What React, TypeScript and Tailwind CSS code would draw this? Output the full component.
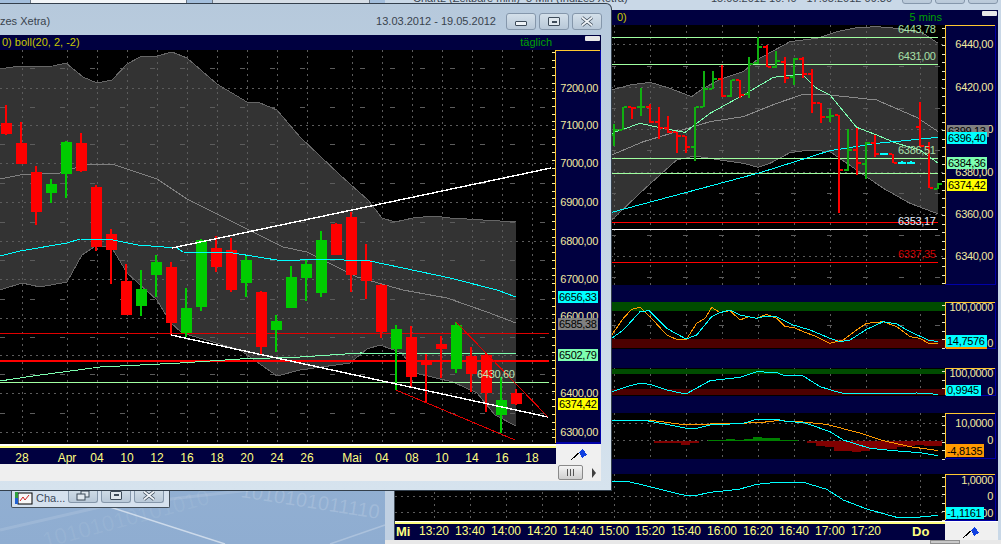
import type { ReactNode } from 'react'

type P = [number, number]
type Candle = [number, number, number, number, number, 'r' | 'g']
type Bar = [number, number, number, number, number, 'r' | 'g' | 'c']

const RED = '#ff0000'
const GREEN = '#00cc00'
const MINT = '#7dffb0'
const CYAN = '#00ffff'
const ORANGE = '#ff9900'
const LIME = '#a0ffa0'

// helpers
const toPts = (list: P[]) => list.map((p) => p.join(',')).join(' ')
// the small chart was measured at 3x, so convert back to page coords
const rx = (d: number) => 610 + d / 3
const low = (list: P[]): P[] => list.map(([x, y]) => [rx(x), 290 + y / 3])
const top = (list: P[]): P[] => list.map(([x, y]) => [rx(x), y / 3])

/* ---------- daily chart data ---------- */
const candles: Candle[] = [
  [6, 105, 135, 123, 134, 'r'], [21, 122, 164, 143, 164, 'r'], [36, 166, 225, 172, 212, 'r'],
  [51, 179, 203, 184, 193, 'g'], [66, 141, 198, 142, 174, 'g'], [81, 133, 172, 143, 171, 'r'],
  [96, 185, 251, 187, 247, 'r'], [111, 229, 284, 234, 250, 'r'], [126, 264, 315, 281, 315, 'r'],
  [141, 270, 316, 289, 306, 'g'], [156, 255, 297, 262, 275, 'g'], [171, 262, 335, 267, 323, 'r'],
  [186, 288, 337, 308, 333, 'g'], [201, 239, 311, 240, 307, 'g'], [216, 236, 272, 248, 267, 'r'],
  [231, 238, 292, 250, 290, 'r'], [246, 256, 297, 260, 283, 'g'], [261, 291, 355, 292, 347, 'r'],
  [276, 315, 352, 321, 330, 'g'], [291, 266, 308, 277, 308, 'g'], [306, 259, 301, 264, 278, 'g'],
  [321, 231, 297, 240, 293, 'g'], [336, 223, 255, 224, 255, 'r'], [351, 212, 292, 217, 275, 'r'],
  [366, 244, 299, 260, 281, 'r'], [381, 284, 338, 285, 332, 'r'], [396, 325, 390, 329, 349, 'g'],
  [411, 326, 387, 337, 377, 'r'], [426, 354, 402, 362, 365, 'r'], [441, 336, 378, 344, 349, 'r'],
  [456, 322, 373, 325, 369, 'g'], [471, 347, 392, 356, 374, 'r'], [486, 353, 412, 355, 393, 'r'],
  [501, 377, 433, 400, 415, 'g'], [516, 389, 405, 393, 404, 'r'],
]
const dayUpper: P[] = [[0, 69], [13, 67], [53, 66], [66, 63], [83, 77], [97, 83], [112, 80], [127, 64], [140, 57], [157, 56], [172, 52], [187, 58], [217, 84], [247, 102], [260, 103], [277, 110], [300, 137], [340, 175], [368, 200], [382, 218], [395, 222], [413, 218], [433, 216], [450, 218], [516, 222]]
const dayLower: P[] = [[0, 290], [22, 283], [40, 287], [67, 282], [82, 255], [97, 245], [112, 248], [127, 273], [157, 300], [170, 322], [182, 333], [213, 342], [240, 350], [257, 362], [277, 376], [300, 370], [350, 363], [367, 349], [380, 345], [402, 353], [415, 373], [453, 382], [477, 393], [495, 415], [516, 426]]
const dayMid: P[] = [[0, 179], [20, 175], [60, 173], [87, 164], [112, 164], [157, 179], [187, 199], [233, 222], [283, 247], [307, 252], [357, 277], [403, 290], [447, 298], [487, 312], [516, 323]]
const dayCyan: P[] = [[0, 256], [20, 251], [67, 243], [80, 239], [113, 240], [138, 245], [177, 248], [183, 252], [233, 253], [283, 261], [317, 259], [370, 261], [450, 278], [497, 290], [516, 297]]
const dayMint: P[] = [[0, 381], [33, 376], [100, 367], [180, 363], [240, 359], [300, 357], [360, 353], [516, 354]]
const dayDates: [number, string][] = [[22, '28'], [67, 'Apr'], [97, '04'], [127, '10'], [157, '12'], [187, '16'], [217, '18'], [247, '20'], [277, '24'], [307, '26'], [352, 'Mai'], [382, '04'], [412, '08'], [442, '10'], [472, '14'], [502, '16'], [532, '18']]
const dayPrices: [number, string][] = [[88, '7200,00'], [125, '7100,00'], [163, '7000,00'], [202, '6900,00'], [241, '6800,00'], [279, '6700,00'], [316, '6600,00'], [393, '6400,00'], [432, '6300,00']]

/* ---------- 5 min chart data (x, high, low, left tick, right tick), 3x values ---------- */
const bars: Bar[] = [
  [10, 372, 437, 405, 390, 'g'], [37, 322, 390, 390, 322, 'g'], [63, 322, 356, 322, 325, 'r'], [90, 264, 347, 322, 320, 'g'],
  [117, 313, 368, 320, 366, 'r'], [144, 322, 418, 366, 385, 'r'], [171, 349, 400, 385, 396, 'r'], [198, 396, 460, 396, 408, 'r'],
  [225, 408, 460, 408, 442, 'r'], [252, 322, 482, 442, 322, 'g'], [279, 212, 322, 322, 267, 'g'], [306, 212, 268, 267, 238, 'g'],
  [333, 195, 290, 238, 288, 'r'], [360, 240, 292, 288, 241, 'g'], [387, 240, 295, 241, 284, 'r'], [414, 172, 295, 283, 192, 'g'],
  [441, 112, 192, 190, 142, 'g'], [468, 135, 202, 142, 200, 'r'], [495, 153, 205, 200, 184, 'g'], [522, 170, 248, 186, 235, 'r'],
  [549, 175, 255, 230, 178, 'g'], [576, 170, 235, 178, 222, 'r'], [603, 207, 338, 222, 310, 'r'], [630, 310, 370, 310, 350, 'r'],
  [657, 328, 365, 350, 348, 'g'], [684, 345, 640, 346, 510, 'r'], [711, 388, 512, 510, 450, 'g'], [738, 384, 525, 450, 490, 'r'],
  [765, 425, 537, 492, 430, 'g'], [792, 405, 470, 430, 462, 'r'], [819, 458, 466, 462, 462, 'c'], [846, 462, 490, 462, 488, 'r'],
  [873, 484, 492, 488, 488, 'c'], [900, 484, 492, 488, 488, 'c'], [927, 305, 440, 380, 438, 'r'], [954, 425, 565, 440, 565, 'r'],
  [981, 550, 568, 566, 551, 'g'],
]
const minUpper: P[] = [[5, 270], [60, 255], [120, 247], [180, 265], [245, 290], [275, 268], [330, 238], [400, 215], [440, 180], [540, 125], [620, 115], [680, 95], [740, 83], [800, 80], [860, 85], [940, 100], [985, 130]]
const minLower: P[] = [[5, 660], [100, 570], [200, 480], [255, 468], [330, 480], [400, 490], [445, 502], [480, 490], [540, 458], [600, 450], [660, 455], [740, 510], [820, 565], [900, 610], [985, 642]]
const minMid: P[] = [[5, 465], [100, 425], [200, 395], [300, 365], [400, 350], [500, 310], [580, 283], [660, 285], [800, 300], [920, 352], [985, 395]]
const minMint: P[] = [[5, 400], [90, 370], [160, 385], [225, 397], [300, 340], [400, 285], [490, 232], [575, 222], [620, 265], [660, 285], [740, 382], [800, 405], [860, 430], [930, 450], [985, 490]]
const minCyan: P[] = [[5, 637], [200, 585], [450, 518], [660, 452], [800, 430], [985, 412]]
const stochOrange: P[] = [[5, 135], [40, 85], [65, 58], [90, 52], [120, 80], [170, 135], [200, 148], [228, 150], [260, 100], [285, 85], [305, 52], [330, 68], [360, 62], [390, 90], [415, 80], [440, 85], [470, 73], [500, 85], [525, 110], [550, 112], [580, 125], [620, 140], [660, 160], [700, 150], [740, 120], [770, 100], [820, 95], [860, 110], [900, 140], [930, 145], [955, 160], [985, 160]]
const stochCyan: P[] = [[5, 145], [40, 120], [90, 65], [118, 62], [170, 115], [228, 147], [260, 135], [305, 80], [330, 68], [360, 60], [390, 75], [440, 85], [470, 78], [500, 80], [550, 105], [600, 120], [660, 145], [690, 155], [720, 150], [770, 118], [820, 95], [860, 102], [900, 125], [955, 150], [985, 155]]
const rsiCyan: P[] = [[5, 305], [50, 290], [90, 280], [120, 283], [170, 300], [228, 312], [300, 272], [390, 262], [440, 245], [500, 248], [525, 257], [580, 258], [630, 290], [680, 305], [700, 310], [860, 312], [920, 309], [985, 313]]
const macdOrange: P[] = [[5, 392], [130, 392], [230, 405], [300, 402], [450, 398], [500, 392], [570, 395], [650, 403], [760, 432], [820, 452], [900, 470], [985, 482]]
const macdCyan: P[] = [[5, 392], [110, 392], [170, 403], [230, 415], [260, 415], [300, 405], [400, 400], [440, 388], [500, 388], [530, 395], [580, 397], [660, 425], [700, 450], [780, 475], [850, 482], [930, 488], [985, 497]]
const macdHist: [number, number][] = [[144, 6], [171, 6], [198, 8], [225, 14], [252, 8], [279, 2], [306, -2], [333, -2], [360, -5], [387, -2], [414, -4], [441, -12], [468, -8], [495, -8], [522, -2], [549, -2], [603, 6], [630, 15], [657, 18], [684, 30], [711, 30], [738, 33], [765, 30], [792, 25], [819, 25], [846, 25], [873, 18], [900, 15], [927, 12], [954, 15], [981, 15]]
const lastCyan: P[] = [[5, 573], [60, 576], [120, 590], [170, 603], [225, 616], [260, 616], [300, 607], [340, 603], [390, 597], [440, 583], [500, 577], [580, 577], [650, 598], [700, 630], [770, 657], [860, 682], [920, 682], [985, 676]]
const minTimes: [number, string][] = [[434, '13:20'], [470, '13:40'], [506, '14:00'], [542, '14:20'], [578, '14:40'], [614, '15:00'], [650, '15:20'], [686, '15:40'], [722, '16:00'], [758, '16:20'], [794, '16:40'], [830, '17:00'], [866, '17:20']]
const minGridX = [434, 470, 506, 542, 578, 614, 650, 686, 722, 758, 794, 830, 866, 920]

function Line({ points, color, width = 1 }: { points: P[]; color: string; width?: number }) {
  return <polyline points={toPts(points)} fill="none" stroke={color} strokeWidth={width} />
}

// price text on an axis, y is the middle of the text
function Price({ x, y, children, color = '#f2e9a0' }: { x: number; y: number; children: ReactNode; color?: string }) {
  return (
    <text x={x} y={y + 4} textAnchor="end" fill={color} className="text-[11px] tracking-[-0.3px]">
      {children}
    </text>
  )
}

function PriceBox({ x, y, w, h = 12, bg, children }: { x: number; y: number; w: number; h?: number; bg: string; children: ReactNode }) {
  return (
    <g>
      <rect x={x} y={y} width={w} height={h} fill={bg} />
      <text x={x + 1} y={y + h - 2} fill="#000000" className="text-[11px] tracking-[-0.3px]">
        {children}
      </text>
    </g>
  )
}

function Flag({ x, y }: { x: number; y: number }) {
  return (
    <g transform={`translate(${x} ${y})`}>
      <path d="M0 11 L10 2" stroke="#000000" strokeWidth="1" fill="none" />
      <path d="M8 3 L12 0 L16 6 L11 9 Z" fill="#1040e0" />
    </g>
  )
}

function CaptionButton({ children, small }: { children: ReactNode; small?: boolean }) {
  return (
    <div
      className={`flex items-center justify-center w-[30px] border border-[#8597ab] bg-gradient-to-b from-[#d4e0ea] to-[#b8c8d8] ${
        small ? 'h-[15px] rounded-b-[3px] border-t-0' : 'h-[17px] rounded-[3px]'
      }`}
    >
      {children}
    </div>
  )
}

function MinIcon() {
  return <div className="w-[12px] h-[5px] mt-[4px] bg-[#eef3f7] border border-[#3d4b59] rounded-[1px]" />
}

function MaxIcon() {
  return (
    <div className="flex items-center justify-center w-[12px] h-[9px] bg-[#dfe7ee] border border-[#3d4b59] rounded-[1px]">
      <div className="w-[5px] h-[2px] border border-[#3d4b59]" />
    </div>
  )
}

function CloseIcon() {
  return (
    <svg width="14" height="11" viewBox="0 0 14 11">
      <path d="M2 1.5 L12 9.5 M12 1.5 L2 9.5" stroke="#3d4b59" strokeWidth="3.4" />
      <path d="M2 1.5 L12 9.5 M12 1.5 L2 9.5" stroke="#f0f4f8" strokeWidth="1.8" />
    </svg>
  )
}

function DailyChart() {
  const pricesGrid = [88, 125, 163, 202, 241, 279, 318, 355, 393, 432]
  const midGrid = [68, 107, 144, 183, 222, 260, 299, 337, 374, 413]
  const ticks = Array.from({ length: 51 }, (_, i) => 52 + i * 7.7)
  return (
    <svg width="601" height="414" viewBox="0 50 601 414" shapeRendering="crispEdges" className="block">
      <rect x="0" y="50" width="556" height="395" fill="#000000" />
      <polygon points={toPts([...dayUpper, ...[...dayLower].reverse()])} fill="#333333" />
      <Line points={dayUpper} color="#666666" />
      <Line points={dayLower} color="#666666" />
      {dayDates.map(([x]) => (
        <line key={x} x1={x} y1="50" x2={x} y2="444" stroke="#5c5c5c" strokeDasharray="2 4" />
      ))}
      {pricesGrid.map((y) => (
        <line key={y} x1="0" y1={y} x2="556" y2={y} stroke="#5c5c5c" strokeDasharray="2 4" />
      ))}
      {midGrid.map((y) => (
        <line key={y} x1="0" y1={y} x2="556" y2={y} stroke="#5c5c5c" strokeDasharray="5 25" />
      ))}
      <Line points={dayMid} color="#808080" />
      <line x1="0" y1="333" x2="549" y2="333" stroke="#e00000" />
      <line x1="0" y1="360.5" x2="549" y2="360.5" stroke={RED} strokeWidth="2" />
      <line x1="0" y1="382" x2="549" y2="382" stroke={LIME} />
      <Line points={dayMint} color={MINT} />
      {candles.map(([x, hi, lo, t, b, c]) => {
        const fill = c === 'r' ? RED : GREEN
        return (
          <g key={x}>
            <rect x={x - 1} y={hi} width="2" height={lo - hi} fill={fill} />
            <rect x={x - 5} y={t} width="11" height={b - t} fill={fill} />
          </g>
        )
      })}
      <Line points={dayCyan} color={CYAN} />
      <line x1="172" y1="248" x2="551" y2="168" stroke="#ffffff" strokeWidth="1.4" />
      <line x1="171" y1="335" x2="548" y2="417" stroke="#ffffff" strokeWidth="1.4" />
      <line x1="456" y1="322" x2="548" y2="417" stroke="#e00000" />
      <line x1="396" y1="390" x2="515" y2="440" stroke="#e00000" />
      <text x="477" y="378" fill="#bfe6b4" className="text-[11px] tracking-[-0.3px]">
        6430,60
      </text>

      {/* date axis */}
      <rect x="0" y="444" width="556" height="1.5" fill="#ffffff" />
      <rect x="0" y="446" width="556" height="2" fill="#ffff80" />
      <rect x="0" y="448" width="556" height="16" fill="#000040" />
      {dayDates.map(([x, label]) => (
        <text key={x} x={x} y="463" textAnchor="middle" fill="#ffff80" className="text-[12px]" dy="-1">
          {label}
        </text>
      ))}

      {/* price axis */}
      <rect x="556" y="50" width="45" height="393" fill="#000040" />
      <rect x="556" y="50" width="45" height="1" fill="#ffc830" />
      <rect x="600" y="50" width="1" height="393" fill="#0000a8" />
      <rect x="556" y="442" width="45" height="1.5" fill="#0000a8" />
      <rect x="555" y="50" width="1" height="393" fill="#ffc830" />
      {ticks.map((y) => (
        <rect key={y} x="552" y={y} width="3" height="1" fill="#fff0a0" />
      ))}
      {dayPrices.map(([y, label]) => (
        <Price key={y} x={598} y={y}>
          {label}
        </Price>
      ))}
      <PriceBox x={558} y={291} w={40} bg={CYAN}>6656,33</PriceBox>
      <PriceBox x={558} y={318} w={40} bg="#808080">6585,38</PriceBox>
      <PriceBox x={558} y={349} w={40} bg={MINT}>6502,79</PriceBox>
      <PriceBox x={558} y={398} w={40} bg="#ffff00">6374,42</PriceBox>

      <rect x="556" y="444" width="45" height="20" fill="#f0f0f0" />
      <Flag x={571} y={449} />
    </svg>
  )
}

function MinuteChart() {
  const yGrid = [44, 87, 129, 172, 214, 256]
  const yDash = [23, 66, 108, 150, 193, 235, 277]
  const panels: [number, number][] = [[302, 47], [368, 28], [413, 46], [474, 47]]
  const axisTicks = (from: number, to: number, step: number) => {
    const out: number[] = []
    for (let y = from; y < to; y += step) out.push(y)
    return out
  }
  return (
    <svg width="603" height="515" viewBox="395 25 603 515" shapeRendering="crispEdges" className="block">
      <rect x="395" y="25" width="603" height="515" fill="#000040" />
      <rect x="395" y="25" width="550" height="260" fill="#000000" />
      {panels.map(([y, h]) => (
        <rect key={y} x="395" y={y} width="550" height={h} fill="#000000" />
      ))}

      {/* main pane */}
      <polygon points={toPts(top([...minUpper, ...[...minLower].reverse()]))} fill="#333333" />
      <Line points={top(minUpper)} color="#707070" />
      <Line points={top(minLower)} color="#707070" />
      {minGridX.map((x) => (
        <g key={x}>
          <line x1={x} y1="25" x2={x} y2="285" stroke="#5c5c5c" strokeDasharray="2 4" />
          <line x1={x} y1="302" x2={x} y2="349" stroke="#5c5c5c" strokeDasharray="2 4" />
          <line x1={x} y1="368" x2={x} y2="396" stroke="#5c5c5c" strokeDasharray="2 4" />
          <line x1={x} y1="413" x2={x} y2="459" stroke="#5c5c5c" strokeDasharray="2 4" />
          <line x1={x} y1="474" x2={x} y2="521" stroke="#5c5c5c" strokeDasharray="2 4" />
        </g>
      ))}
      {yGrid.map((y) => (
        <line key={y} x1="395" y1={y} x2="945" y2={y} stroke="#5c5c5c" strokeDasharray="2 4" />
      ))}
      {yDash.map((y) => (
        <line key={y} x1="395" y1={y} x2="945" y2={y} stroke="#5c5c5c" strokeDasharray="5 31" />
      ))}
      <Line points={top(minMid)} color="#8a8a8a" />
      {[37, 64, 158, 173].map((y) => (
        <line key={y} x1="395" y1={y} x2="938" y2={y} stroke={LIME} />
      ))}
      <line x1="395" y1="222" x2="938" y2="222" stroke={RED} />
      <line x1="395" y1="229" x2="938" y2="229" stroke="#ffffff" />
      <line x1="395" y1="262" x2="938" y2="262" stroke={RED} />
      <Line points={top(minMint)} color={MINT} />
      <Line points={top(minCyan)} color={CYAN} />
      {bars.map(([d, hi, lo, l, r, c]) => {
        const fill = c === 'r' ? RED : c === 'g' ? '#10b010' : CYAN
        const x = Math.round(rx(d))
        return (
          <g key={d}>
            <rect x={x} y={hi / 3} width="2" height={(lo - hi) / 3} fill={fill} />
            <rect x={x - 3} y={l / 3 - 1} width="3" height="2" fill={fill} />
            <rect x={x + 2} y={r / 3 - 1} width="3" height="2" fill={fill} />
          </g>
        )
      })}
      <text x="898" y="33" fill="#a8e0a8" className="text-[11px] tracking-[-0.3px]">6443,78</text>
      <text x="898" y="60" fill="#a8e0a8" className="text-[11px] tracking-[-0.3px]">6431,00</text>
      <text x="898" y="154" fill="#a8e0a8" className="text-[11px] tracking-[-0.3px]">6386,51</text>
      <text x="898" y="225" fill="#e8f0ff" className="text-[11px] tracking-[-0.3px]">6353,17</text>
      <text x="898" y="258" fill="#d00000" className="text-[11px] tracking-[-0.3px]">6337,35</text>

      {/* stochastic pane */}
      <rect x="395" y="302" width="550" height="9" fill="#004c00" />
      <rect x="395" y="339" width="550" height="9" fill="#4c0000" />
      <line x1="395" y1="325" x2="945" y2="325" stroke="#5c5c5c" strokeDasharray="5 31" />
      <Line points={low(stochOrange)} color={ORANGE} />
      <Line points={low(stochCyan)} color={CYAN} />

      {/* rsi pane */}
      <rect x="395" y="369" width="550" height="5" fill="#004c00" />
      <rect x="395" y="389" width="550" height="6" fill="#4c0000" />
      <Line points={low(rsiCyan)} color={CYAN} />

      {/* macd pane */}
      <line x1="395" y1="423" x2="945" y2="423" stroke="#5c5c5c" strokeDasharray="2 4" />
      <line x1="395" y1="440" x2="945" y2="440" stroke="#5c5c5c" strokeDasharray="2 4" />
      {macdHist.map(([d, h]) => (
        <rect
          key={d}
          x={Math.round(rx(d)) - 4}
          y={h > 0 ? 440.5 : 440.5 + h / 3}
          width="9"
          height={Math.abs(h) / 3}
          fill={h > 0 ? '#800000' : '#008000'}
        />
      ))}
      <Line points={low(macdOrange)} color={ORANGE} />
      <Line points={low(macdCyan)} color={CYAN} />

      {/* last pane */}
      <line x1="395" y1="496" x2="945" y2="496" stroke="#5c5c5c" strokeDasharray="2 4" />
      <line x1="395" y1="512" x2="945" y2="512" stroke="#5c5c5c" strokeDasharray="2 4" />
      <Line points={low(lastCyan)} color={CYAN} />

      {/* time axis */}
      <rect x="395" y="521" width="603" height="1" fill="#ffffff" />
      <rect x="395" y="522" width="550" height="1.5" fill="#ffff80" />
      {minTimes.map(([x, label]) => (
        <text key={x} x={x} y="535" textAnchor="middle" fill="#ffff80" className="text-[12px]">
          {label}
        </text>
      ))}
      <text x="396" y="536" fill="#ffff80" className="text-[13px] font-bold">Mi</text>
      <text x="912" y="536" fill="#ffff80" className="text-[13px] font-bold">Do</text>

      {/* price axes */}
      {([[25, 260], [302, 47], [368, 28], [413, 46], [474, 47]] as [number, number][]).map(([y, h]) => (
        <g key={y}>
          <rect x="945" y={y} width="51" height={h} fill="#000040" />
          <rect x="945" y={y} width="51" height="1" fill="#ffc830" />
          <rect x="945" y={y} width="1" height={h} fill="#ffc830" />
          <rect x="995" y={y} width="1" height={h} fill="#0000a8" />
          <rect x="945" y={y + h - 1} width="51" height="1" fill="#0000a8" />
          {axisTicks(y + 3, y + h, 8.5).map((t) => (
            <rect key={t} x="942" y={t} width="3" height="1" fill="#e8e8c8" />
          ))}
        </g>
      ))}
      {([[44, '6440,00'], [87, '6420,00'], [129, '6400,00'], [172, '6380,00'], [214, '6360,00'], [256, '6340,00']] as [number, string][]).map(([y, label]) => (
        <Price key={y} x={993} y={y}>
          {label}
        </Price>
      ))}
      <PriceBox x={947} y={125} w={42} bg="#808080">6399,13</PriceBox>
      <PriceBox x={947} y={132} w={40} bg={CYAN}>6396,40</PriceBox>
      <PriceBox x={947} y={157} w={40} bg={MINT}>6384,36</PriceBox>
      <PriceBox x={947} y={179} w={40} bg="#ffff00">6374,42</PriceBox>

      <Price x={993} y={307}>100,0000</Price>
      <Price x={993} y={343}>0</Price>
      <rect x="946" y="347" width="41" height="2" fill={ORANGE} />
      <PriceBox x={946} y={335} w={41} bg={CYAN}>14,7576</PriceBox>

      <Price x={993} y={373}>100,0000</Price>
      <Price x={993} y={391}>0</Price>
      <PriceBox x={946} y={385} w={35} h={11} bg={CYAN}>0,9945</PriceBox>

      <Price x={993} y={423}>10,0000</Price>
      <Price x={993} y={440}>0</Price>
      <PriceBox x={946} y={444} w={38} h={13} bg={ORANGE}>-4,8135</PriceBox>

      <Price x={993} y={480}>1,0000</Price>
      <Price x={993} y={496}>0</Price>
      <Price x={993} y={513}>-1,0000</Price>
      <PriceBox x={946} y={507} w={38} bg={CYAN}>-1,1161</PriceBox>

      <rect x="945" y="522" width="53" height="18" fill="#f0f0f0" />
      <Flag x={963} y={527} />
    </svg>
  )
}

function BackWindow() {
  return (
    <div className="absolute left-[385px] top-0 w-[616px] h-[544px] flex flex-col bg-[#c9d8e7] overflow-hidden">
      <div className="h-[10px] relative text-[11px] text-[#3a4450]">
        <span className="absolute left-[28px] top-[-10px]">Chart2 (Zeitbare mini)&nbsp; 5 Min (Indizes Xetra)</span>
        <span className="absolute left-[326px] top-[-10px]">15.05.2012 10:40 - 17.05.2012 09:30</span>
        <div className="absolute right-[3px] top-[-13px] flex gap-[3px]">
          <CaptionButton><span /></CaptionButton>
          <CaptionButton><span /></CaptionButton>
          <CaptionButton><span /></CaptionButton>
        </div>
      </div>
      <div className="flex flex-1">
        <div className="w-[10px] bg-[#c0d0e2] border-r border-[#46525e]" />
        <div className="flex flex-col w-[603px]">
          <div className="relative flex items-center justify-between h-[15px] bg-[#000040] px-[6px] text-[11px]">
            <span className="text-[#c8c800] ml-[216px]">0)</span>
            <span className="text-[#00a000] mr-[50px]">5 mins</span>
            <div className="absolute right-[1px] top-[1px] w-[15px] h-[5px] bg-[#e8e8e8] rounded-[1px]" />
          </div>
          <MinuteChart />
        </div>
      </div>
      <div className="flex h-[4px] bg-[#e8e8e8] pl-[545px]">
        <div className="w-[30px] bg-[#c8c8c8] border border-[#909090]" />
      </div>
    </div>
  )
}

function FrontWindow() {
  return (
    <div className="absolute left-0 top-[3px] w-[612px] h-[488px] flex flex-col bg-gradient-to-b from-[#b6c9dc] to-[#d6e3ee] border-t border-r border-b border-[#333f4c] rounded-tr-[6px] overflow-hidden">
      <div className="flex items-center justify-between h-[31px] pr-[9px] text-[11px] text-[#39434e]">
        <span className="mt-[3px]">zes Xetra)</span>
        <div className="flex items-center mt-[4px]">
          <span className="mr-[10px]">13.03.2012 - 19.05.2012</span>
          <div className="flex gap-[3px]">
            <CaptionButton><MinIcon /></CaptionButton>
            <CaptionButton><MaxIcon /></CaptionButton>
            <CaptionButton><CloseIcon /></CaptionButton>
          </div>
        </div>
      </div>
      <div className="flex flex-col w-[601px]">
        <div className="relative flex items-center justify-between h-[15px] bg-[#000040] pl-[2px] pr-[49px] text-[11px]">
          <span className="text-[#c8c800]">0) boll(20, 2, -2)</span>
          <span className="text-[#00a000]">täglich</span>
          <div className="absolute right-[1px] top-[1px] w-[15px] h-[5px] bg-[#e8e8e8] rounded-[1px]" />
        </div>
        <DailyChart />
        <div className="flex items-center justify-end gap-[9px] h-[17px] bg-[#efefef] pr-[5px]">
          <div className="flex items-center justify-center gap-[1px] w-[25px] h-[15px] bg-gradient-to-b from-[#f4f4f4] to-[#cfcfcf] border border-[#8a8a8a] rounded-[2px]">
            <div className="w-[1px] h-[7px] bg-[#555555]" />
            <div className="w-[1px] h-[7px] ml-[1px] bg-[#555555]" />
            <div className="w-[1px] h-[7px] ml-[1px] bg-[#555555]" />
          </div>
          <div className="w-0 h-0 border-y-[5px] border-y-transparent border-l-[4px] border-l-[#404040]" />
        </div>
      </div>
    </div>
  )
}

function MinimizedWindow() {
  return (
    <div className="absolute left-[11px] top-[488px] w-[159px] h-[20px] flex items-start justify-between pl-[3px] pr-[5px] bg-[#d5e1ee] border-x border-b border-[#44505c] rounded-b-[2px]">
      <div className="flex items-center gap-[3px] mt-[2px]">
        <svg width="18" height="15" viewBox="0 0 18 15">
          <rect x="3" y="2" width="14" height="11" fill="#f8f8f8" stroke="#000000" />
          <path d="M5 10 L8 6 L10 9 L14 4" stroke="#d02020" fill="none" />
          <rect x="0" y="1" width="3" height="6" fill="#2f9f3f" />
          <rect x="0" y="7" width="3" height="6" fill="#2060d0" />
        </svg>
        <span className="text-[11px] text-[#3c4a5c]">Cha...</span>
      </div>
      <div className="flex gap-[3px]">
        <CaptionButton small>
          <svg width="14" height="11" viewBox="0 0 14 11">
            <rect x="5" y="1" width="8" height="6" fill="#dfe7ee" stroke="#3d4b59" />
            <rect x="1" y="4" width="8" height="6" fill="#dfe7ee" stroke="#3d4b59" />
          </svg>
        </CaptionButton>
        <CaptionButton small><MaxIcon /></CaptionButton>
        <CaptionButton small><CloseIcon /></CaptionButton>
      </div>
    </div>
  )
}

// desktop wallpaper: blue with faint binary digits and light streaks
function Wallpaper() {
  return (
    <svg width="1001" height="544" viewBox="0 0 1001 544" className="absolute inset-0">
      <path d="M0 530 L100 507 L250 490" stroke="#ffffff" strokeOpacity="0.12" strokeWidth="3" fill="none" />
      <path d="M110 507 L225 544" stroke="#ffffff" strokeOpacity="0.55" strokeWidth="1.5" fill="none" />
      <path d="M330 544 L385 525" stroke="#ffffff" strokeOpacity="0.25" strokeWidth="1.5" fill="none" />
      <text x="240" y="497" fill="#ffffff" fillOpacity="0.16" transform="rotate(9 240 497)" className="text-[20px]">
        1010101011110
      </text>
      <text x="45" y="548" fill="#ffffff" fillOpacity="0.07" transform="rotate(-15 45 548)" className="text-[22px]">
        10101010101010
      </text>
    </svg>
  )
}

export default function App() {
  return (
    <div className="relative w-[1001px] h-[544px] overflow-hidden bg-gradient-to-b from-[#a3bedc] to-[#8fadd1] font-['Liberation_Sans',sans-serif]">
      <Wallpaper />
      <div className="absolute left-[30px] top-0 w-[157px] h-[3px] bg-[#f2f5f8] border-x border-[#6a7684]" />
      <div className="absolute left-[212px] top-0 w-[158px] h-[3px] bg-[#d5dde6] border-x border-[#6a7684]" />
      <MinimizedWindow />
      <BackWindow />
      <FrontWindow />
    </div>
  )
}
